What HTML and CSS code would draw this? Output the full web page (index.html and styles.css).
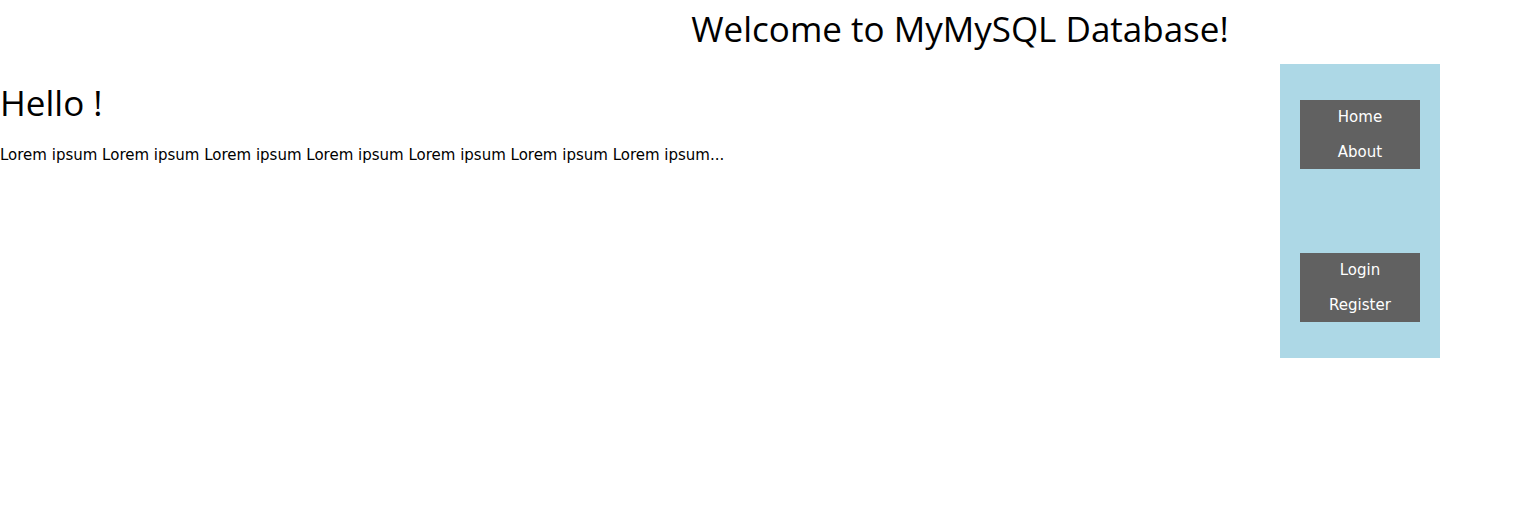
FILE: index.html
```html
<!DOCTYPE html>
<html lang="en">
<head>
<meta charset="utf-8">
<title>MyMySQL Database</title>
<link rel="stylesheet" href="styles.css">
</head>
<body>
<header class="banner"><h1 class="title">Welcome to MyMySQL Database!</h1></header>
<div class="layout">
<main class="content">
<h2 class="title">Hello !</h2>
<p class="text">Lorem ipsum Lorem ipsum Lorem ipsum Lorem ipsum Lorem ipsum Lorem ipsum Lorem ipsum...</p>
</main>
<nav class="sidebar">
<ul class="menu">
<li><a class="link" href="#home">Home</a></li>
<li><a class="link" href="#about">About</a></li>
</ul>
<ul class="menu">
<li><a class="link" href="#login">Login</a></li>
<li><a class="link" href="#register">Register</a></li>
</ul>
</nav>
</div>
</body>
</html>
```
FILE: styles.css
```css
* { box-sizing: border-box; }
body { margin: 0; background: #fff; color: #000; font-family: "DejaVu Sans", Verdana, sans-serif; font-size: 15px; line-height: 22px; }
.banner { padding: 2px 0 8px 390px; text-align: center; }
.title { margin: 0; font-family: "Open Sans", "Segoe UI", sans-serif; font-size: 35px; font-weight: 400; line-height: 54px; }
.layout { display: flex; justify-content: space-between; align-items: flex-start; padding-right: 90px; }
.content { flex: 1; padding-top: 12px; }
.text { margin: 14px 0 0; }
.sidebar { display: flex; flex-direction: column; gap: 84px; width: 160px; padding: 36px 20px; background: #add8e6; }
.menu { display: flex; flex-direction: column; gap: 1px; margin: 0; padding: 0; list-style: none; background: #616161; }
.link { display: block; padding: 6px 8px; color: #fff; text-align: center; text-decoration: none; }
```
